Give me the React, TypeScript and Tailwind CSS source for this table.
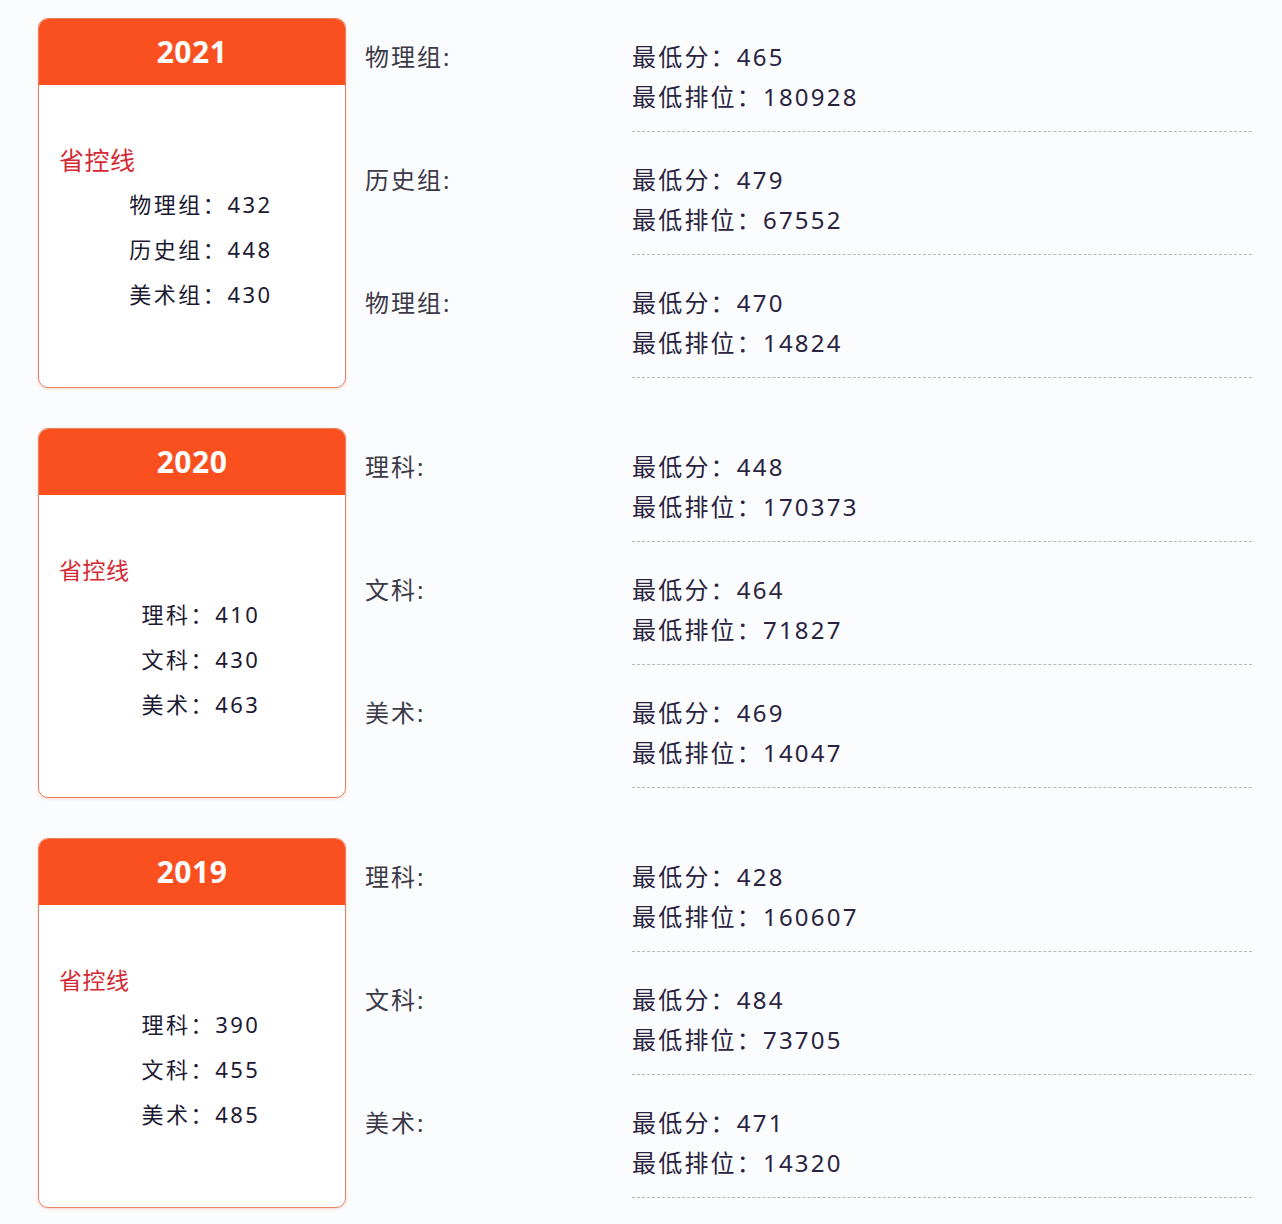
import React from 'react';

type Group = { name: string; score: number; rank: number };
type Year = { year: string; lines: [string, number][]; groups: Group[]; big?: boolean };

const years: Year[] = [
  {
    year: '2021',
    big: true,
    lines: [['物理组', 432], ['历史组', 448], ['美术组', 430]],
    groups: [
      { name: '物理组', score: 465, rank: 180928 },
      { name: '历史组', score: 479, rank: 67552 },
      { name: '物理组', score: 470, rank: 14824 },
    ],
  },
  {
    year: '2020',
    lines: [['理科', 410], ['文科', 430], ['美术', 463]],
    groups: [
      { name: '理科', score: 448, rank: 170373 },
      { name: '文科', score: 464, rank: 71827 },
      { name: '美术', score: 469, rank: 14047 },
    ],
  },
  {
    year: '2019',
    lines: [['理科', 390], ['文科', 455], ['美术', 485]],
    groups: [
      { name: '理科', score: 428, rank: 160607 },
      { name: '文科', score: 484, rank: 73705 },
      { name: '美术', score: 471, rank: 14320 },
    ],
  },
];

const YearCard = ({ y }: { y: Year }) => (
  <div className="w-[308px] h-[370px] shrink-0 rounded-[10px] border-[1.5px] border-[#e5825f] bg-white overflow-hidden shadow-[0_1px_3px_rgba(236,120,80,0.3)] flex flex-col">
    <div className="h-[66px] bg-[#fa5020] flex items-center justify-center pb-[2px] text-white text-[30px] font-bold tracking-[0.5px]">
      {y.year}
    </div>
    <div className="flex-1 flex flex-col pl-[20px] pt-[60px]">
      <div className={`${y.big ? 'text-[25px] tracking-[0.5px]' : 'text-[23px] tracking-[0.5px]'} text-[#d42a35] leading-[30px]`}>
        省控线
      </div>
      <div className="flex flex-col items-center pr-[2px] pt-[7px]">
        {y.lines.map(([k, v]) => (
          <div key={k} className="h-[45px] leading-[45px] text-[22px] tracking-[2.5px] text-[#1c1a33]">
            {k}：{v}
          </div>
        ))}
      </div>
    </div>
  </div>
);

const GroupRow = ({ g }: { g: Group }) => (
  <div className="h-[123px] flex pt-[19px]">
    <div className="w-[267px] shrink-0 text-[24px] leading-[40px] tracking-[2px] text-[#3d3a48]">{g.name}:</div>
    <div className="w-[620px] flex flex-col">
      <div className="text-[24px] leading-[40px] tracking-[2.2px] text-[#2a2440]">最低分：{g.score}</div>
      <div className="text-[24px] leading-[40px] tracking-[2.2px] text-[#2a2440]">最低排位：{g.rank}</div>
      <div className="mt-[14px] border-t-[1.5px] border-dashed border-[#b8b8bf]" />
    </div>
  </div>
);

export default function App() {
  return (
    <div
      className="w-[1282px] h-[1224px] bg-[#fbfcfe] pt-[18px] pl-[38px] flex flex-col gap-[40px]"
      style={{ fontFamily: '"Noto Sans", "Noto Sans CJK SC", sans-serif' }}
    >
      {years.map((y) => (
        <div key={y.year} className="flex">
          <YearCard y={y} />
          <div className="flex flex-col pl-[19px] h-[370px]">
            {y.groups.map((g, i) => (
              <GroupRow key={i} g={g} />
            ))}
          </div>
        </div>
      ))}
    </div>
  );
}
